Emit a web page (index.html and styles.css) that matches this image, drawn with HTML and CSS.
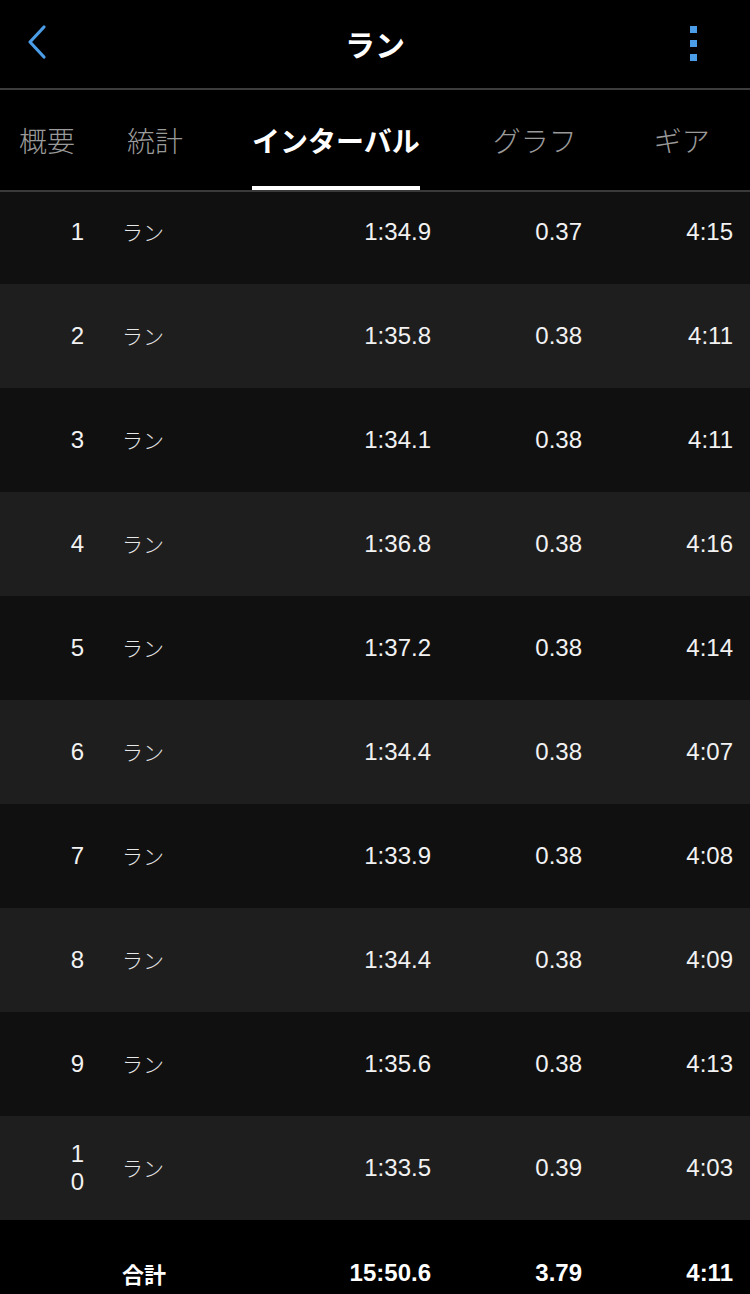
FILE: index.html
```html
<!DOCTYPE html>
<html lang="ja">
<head>
<meta charset="utf-8">
<link rel="stylesheet" href="styles.css">
</head>
<body>
<div class="app">
  <header class="topbar">
    <svg class="back" width="22" height="36" viewBox="0 0 22 36"><path d="M18 3 L4 18 L18 33" fill="none" stroke="#4a9de6" stroke-width="3.2" stroke-linecap="round" stroke-linejoin="round"/></svg>
    <h1 class="title">ラン</h1>
    <div class="more"><span></span><span></span><span></span></div>
  </header>
  <nav class="tabs">
    <div class="tab t1">概要</div>
    <div class="tab t2">統計</div>
    <div class="tab t3 active">インターバル</div>
    <div class="tab t4">グラフ</div>
    <div class="tab t5">ギア</div>
  </nav>
  <div class="table">
    <div class="row dark first"><div class="num">1</div><div class="lbl">ラン</div><div class="val">1:34.9</div><div class="val">0.37</div><div class="val">4:15</div></div>
    <div class="row light"><div class="num">2</div><div class="lbl">ラン</div><div class="val">1:35.8</div><div class="val">0.38</div><div class="val">4:11</div></div>
    <div class="row dark"><div class="num">3</div><div class="lbl">ラン</div><div class="val">1:34.1</div><div class="val">0.38</div><div class="val">4:11</div></div>
    <div class="row light"><div class="num">4</div><div class="lbl">ラン</div><div class="val">1:36.8</div><div class="val">0.38</div><div class="val">4:16</div></div>
    <div class="row dark"><div class="num">5</div><div class="lbl">ラン</div><div class="val">1:37.2</div><div class="val">0.38</div><div class="val">4:14</div></div>
    <div class="row light"><div class="num">6</div><div class="lbl">ラン</div><div class="val">1:34.4</div><div class="val">0.38</div><div class="val">4:07</div></div>
    <div class="row dark"><div class="num">7</div><div class="lbl">ラン</div><div class="val">1:33.9</div><div class="val">0.38</div><div class="val">4:08</div></div>
    <div class="row light"><div class="num">8</div><div class="lbl">ラン</div><div class="val">1:34.4</div><div class="val">0.38</div><div class="val">4:09</div></div>
    <div class="row dark"><div class="num">9</div><div class="lbl">ラン</div><div class="val">1:35.6</div><div class="val">0.38</div><div class="val">4:13</div></div>
    <div class="row light"><div class="num"><span class="wrap">10</span></div><div class="lbl">ラン</div><div class="val">1:33.5</div><div class="val">0.39</div><div class="val">4:03</div></div>
    <div class="row total"><div class="num"></div><div class="lbl">合計</div><div class="val">15:50.6</div><div class="val">3.79</div><div class="val">4:11</div></div>
  </div>
</div>
</body>
</html>
```
FILE: styles.css
```css
html, body {
  margin: 0;
  padding: 0;
  background: #000;
}
body {
  font-family: "Liberation Sans", "Noto Sans CJK JP", sans-serif;
  color: #fff;
  width: 750px;
  height: 1294px;
  overflow: hidden;
}
.topbar {
  height: 88px;
  border-bottom: 2px solid #3d3d3d;
  display: grid;
  grid-template-columns: 1fr auto 1fr;
  align-items: center;
  padding: 0 26px;
}
.back {
  display: block;
  margin-top: -4px;
  justify-self: start;
}
.title {
  margin: -2px 0 0 0;
  font-family: "Noto Sans CJK JP", sans-serif;
  font-weight: 700;
  font-size: 30px;
  line-height: 1;
}
.more {
  justify-self: end;
  display: flex;
  flex-direction: column;
  gap: 7px;
  margin: -2px 27px 0 0;
}
.more span {
  display: block;
  width: 7px;
  height: 7px;
  background: #4a9de6;
}
.tabs {
  height: 100px;
  border-bottom: 2px solid #3a3a3a;
  display: flex;
  align-items: stretch;
  font-family: "Noto Sans CJK JP", sans-serif;
  font-size: 28px;
  font-weight: 300;
}
.tab {
  color: #9a9a9a;
  display: flex;
  align-items: center;
  box-sizing: border-box;
  border-bottom: 4px solid transparent;
  margin-top: 4px;
}
.tab.active {
  color: #fff;
  font-weight: 700;
  border-bottom-color: #fff;
}
.t1 { margin-left: 19px; }
.t2 { margin-left: 52px; }
.t3 { margin-left: 69px; }
.t4 { margin-left: 73px; }
.t5 { margin-left: 77px; }
.table {
  display: flex;
  flex-direction: column;
}
.row {
  height: 104px;
  display: grid;
  grid-template-columns: 84px 176px 171px 151px 151px;
  padding-right: 17px;
  align-items: center;
  font-size: 24px;
  box-sizing: border-box;
}
.row.first {
  height: 92px;
  padding-bottom: 12px;
}
.dark { background: #101010; }
.light { background: #1e1e1e; }
.total {
  background: #000;
  height: 74px;
  padding-top: 32px;
  font-weight: 700;
}
.num {
  text-align: right;
  color: #f2f2f2;
}
.wrap {
  display: inline-block;
  width: 14px;
  word-break: break-all;
  line-height: 28px;
}
.lbl {
  padding-left: 38px;
  font-family: "Noto Sans CJK JP", sans-serif;
  font-size: 21px;
  font-weight: 300;
  color: #e8e8e8;
  margin-top: -3px;
}
.total .lbl {
  font-size: 22px;
  font-weight: 700;
  color: #fff;
  margin-top: 0;
}
.val {
  text-align: right;
  color: #f2f2f2;
}
.total .val { color: #fff; }
```
